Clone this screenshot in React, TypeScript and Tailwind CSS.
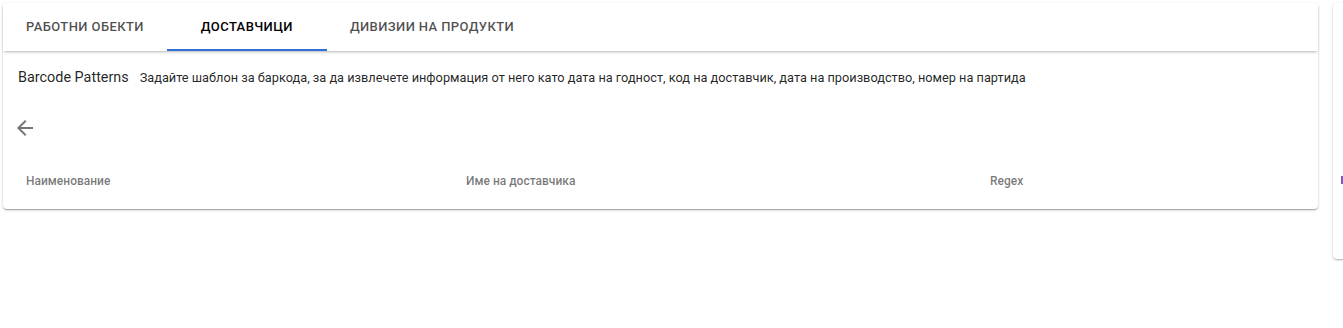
import { useState } from 'react';

const tabs = ['Работни обекти', 'Доставчици', 'Дивизии на продукти'];

export default function App() {
    const [active, setActive] = useState(1);

    return (
        <div className="w-[1343px] h-[328px] bg-white overflow-hidden font-['Roboto',sans-serif]">
            <div className="flex gap-[15px] pl-[3px] pt-[3px]">
                <div className="w-[1315px] h-[206px] shrink-0 bg-white rounded-[4px] shadow-[0_1px_3px_rgba(0,0,0,0.2),0_1px_1px_rgba(0,0,0,0.14),0_2px_1px_-1px_rgba(0,0,0,0.12)] flex flex-col">
                    <div className="h-[48px] flex rounded-t-[4px] bg-white shadow-[0_2px_3px_-1px_rgba(0,0,0,0.3)] relative z-10">
                        {tabs.map((t, i) => (
                            <button
                                key={t}
                                onClick={() => setActive(i)}
                                className={`relative min-w-[160px] px-[23px] h-[48px] text-[13px] font-medium uppercase tracking-[0.4px] ${
                                    active === i ? 'text-black' : 'text-[rgba(0,0,0,0.7)]'
                                }`}
                            >
                                {t}
                                {active === i && (
                                    <span className="absolute left-0 right-0 bottom-0 h-[2px] bg-[#2f6fd6]" />
                                )}
                            </button>
                        ))}
                    </div>

                    <div className="flex items-baseline gap-[11px] pl-[15px] pt-[16px]">
                        <span className="text-[14.4px] text-[rgba(0,0,0,0.87)]">Barcode Patterns</span>
                        <span className="text-[12.75px] text-[rgba(0,0,0,0.87)]">
                            Задайте шаблон за баркода, за да извлечете информация от него като дата на годност, код на доставчик, дата на производство, номер на партида
                        </span>
                    </div>

                    <div className="pl-[10px] pt-[27px]">
                        <svg width="24" height="24" viewBox="0 0 24 24" className="fill-[#757575]">
                            <path d="M20 11H7.83l5.59-5.59L12 4l-8 8 8 8 1.41-1.41L7.83 13H20v-2z" />
                        </svg>
                    </div>

                    <div className="flex pl-[23px] pt-[32px] text-[12px] font-medium text-[rgba(0,0,0,0.54)]">
                        <div className="w-[440px]">Наименование</div>
                        <div className="w-[524px]">Име на доставчика</div>
                        <div>Regex</div>
                    </div>
                </div>

                <div className="w-[40px] h-[256px] shrink-0 bg-white rounded-[4px] shadow-[0_1px_3px_rgba(0,0,0,0.2),0_1px_1px_rgba(0,0,0,0.14)] flex flex-col">
                    <div className="h-[173px]" />
                    <div className="ml-[8px] w-[2px] h-[8px] bg-[#7e57c2]" />
                </div>
            </div>
        </div>
    );
}
